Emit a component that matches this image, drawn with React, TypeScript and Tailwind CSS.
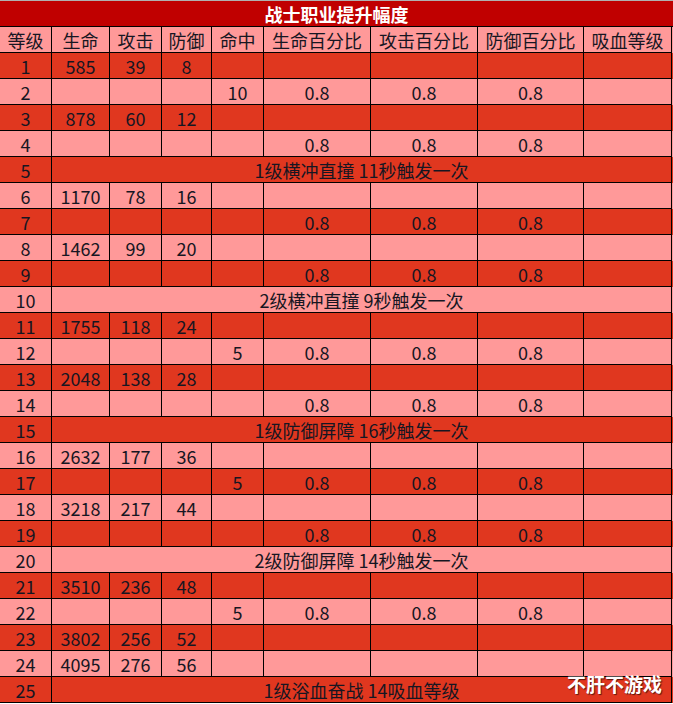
import React from "react";

const COLS = "grid-cols-[52px_58px_52px_50px_52px_107px_107px_106px_88px]";

type Row = { lv: number; span?: string; v?: string[] };

const P = ["0.8", "0.8", "0.8"];
const rows: Row[] = [
  { lv: 1, v: ["585", "39", "8", "", "", "", "", ""] },
  { lv: 2, v: ["", "", "", "10", ...P, ""] },
  { lv: 3, v: ["878", "60", "12", "", "", "", "", ""] },
  { lv: 4, v: ["", "", "", "", ...P, ""] },
  { lv: 5, span: "1级横冲直撞 11秒触发一次" },
  { lv: 6, v: ["1170", "78", "16", "", "", "", "", ""] },
  { lv: 7, v: ["", "", "", "", ...P, ""] },
  { lv: 8, v: ["1462", "99", "20", "", "", "", "", ""] },
  { lv: 9, v: ["", "", "", "", ...P, ""] },
  { lv: 10, span: "2级横冲直撞 9秒触发一次" },
  { lv: 11, v: ["1755", "118", "24", "", "", "", "", ""] },
  { lv: 12, v: ["", "", "", "5", ...P, ""] },
  { lv: 13, v: ["2048", "138", "28", "", "", "", "", ""] },
  { lv: 14, v: ["", "", "", "", ...P, ""] },
  { lv: 15, span: "1级防御屏障 16秒触发一次" },
  { lv: 16, v: ["2632", "177", "36", "", "", "", "", ""] },
  { lv: 17, v: ["", "", "", "5", ...P, ""] },
  { lv: 18, v: ["3218", "217", "44", "", "", "", "", ""] },
  { lv: 19, v: ["", "", "", "", ...P, ""] },
  { lv: 20, span: "2级防御屏障 14秒触发一次" },
  { lv: 21, v: ["3510", "236", "48", "", "", "", "", ""] },
  { lv: 22, v: ["", "", "", "5", ...P, ""] },
  { lv: 23, v: ["3802", "256", "52", "", "", "", "", ""] },
  { lv: 24, v: ["4095", "276", "56", "", "", "", "", ""] },
  { lv: 25, span: "1级浴血奋战 14吸血等级" },
];

const headers = ["等级", "生命", "攻击", "防御", "命中", "生命百分比", "攻击百分比", "防御百分比", "吸血等级"];

const cell = "h-[26px] flex items-center justify-center border-r border-b border-black";

export default function App() {
  return (
    <div
      className="relative w-[673px] h-[704px] overflow-hidden text-[18px] text-[#161622] leading-none"
      style={{ fontFamily: '"Noto Sans CJK SC", "Noto Sans", sans-serif' }}
    >
      <div className="h-[27px] bg-[#c00000] border-t border-[#b0b0b0] border-b border-b-black flex items-center justify-center text-white font-bold text-[18px]">
        战士职业提升幅度
      </div>
      <div className={`grid ${COLS} bg-[#ff9999]`}>
        {headers.map((h) => (
          <div key={h} className={cell}>
            {h}
          </div>
        ))}
      </div>
      {rows.map((r) => {
        const bg = r.lv % 2 === 1 ? "bg-[#e0371f]" : "bg-[#ff9999]";
        return (
          <div key={r.lv} className={`grid ${COLS} ${bg}`}>
            <div className={cell}>{r.lv}</div>
            {r.span ? (
              <div className={`${cell} col-span-8`}>{r.span}</div>
            ) : (
              r.v!.map((t, i) => (
                <div key={i} className={cell}>
                  {t}
                </div>
              ))
            )}
          </div>
        );
      })}
      <div
        className="absolute right-[11px] bottom-[11px] text-white font-bold text-[19px] leading-none"
        style={{ textShadow: "1px 1px 1px rgba(0,0,0,0.6)" }}
      >
        不肝不游戏
      </div>
    </div>
  );
}
